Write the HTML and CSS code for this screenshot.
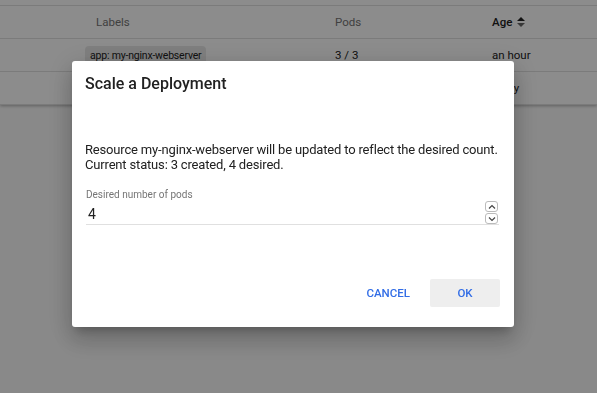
FILE: index.html
```html
<!DOCTYPE html>
<html lang="en">
<head>
    <meta charset="UTF-8">
    <meta name="viewport" content="width=device-width, initial-scale=1.0">
    <title>Scale a Deployment</title>
    <link rel="stylesheet" href="styles.css">
</head>
<body>
    <!-- Deployments table behind the dialog -->
    <div class="table-card">
        <div class="row row-top"></div>
        <div class="row header">
            <div class="cell col-name"></div>
            <div class="cell col-labels">Labels</div>
            <div class="cell col-pods">Pods</div>
            <div class="cell col-age sorted">Age
                <svg class="sort-icon" width="8" height="12" viewBox="0 0 8 12">
                    <path d="M0 5 L4 1 L8 5 Z" fill="#222"/>
                    <path d="M0 7 L4 11 L8 7 Z" fill="#666"/>
                </svg>
            </div>
        </div>
        <div class="row">
            <div class="cell col-name"></div>
            <div class="cell col-labels"><span class="chip">app: my-nginx-webserver</span></div>
            <div class="cell col-pods">3 / 3</div>
            <div class="cell col-age">an hour</div>
        </div>
        <div class="row">
            <div class="cell col-name"></div>
            <div class="cell col-labels"></div>
            <div class="cell col-pods"></div>
            <div class="cell col-age">a day</div>
        </div>
    </div>

    <!-- Scale dialog -->
    <div class="overlay">
        <div class="dialog">
            <h2 class="dialog-title">Scale a Deployment</h2>
            <p class="dialog-text">Resource my-nginx-webserver will be updated to reflect the desired count.<br>Current status: 3 created, 4 desired.</p>
            <div class="field">
                <label class="field-label">Desired number of pods</label>
                <div class="field-input">
                    <span class="field-value">4</span>
                    <div class="spinner">
                        <span class="spin-btn">
                            <svg width="8" height="6" viewBox="0 0 8 6"><path d="M1 4.5 L4 1.5 L7 4.5" fill="none" stroke="#444" stroke-width="1.2"/></svg>
                        </span>
                        <span class="spin-btn">
                            <svg width="8" height="6" viewBox="0 0 8 6"><path d="M1 1.5 L4 4.5 L7 1.5" fill="none" stroke="#444" stroke-width="1.2"/></svg>
                        </span>
                    </div>
                </div>
            </div>
            <div class="dialog-actions">
                <button class="btn">Cancel</button>
                <button class="btn btn-ok">OK</button>
            </div>
        </div>
    </div>
</body>
</html>
```

FILE: styles.css
```css
body {
    font-family: Roboto, "Noto Sans", sans-serif;
    margin: 0;
    padding: 0;
    background-color: #fafafa;
    height: 393px;
    overflow: hidden;
}

/* Table behind the dialog */
.table-card {
    background-color: #fff;
    box-shadow: 0 1px 3px rgba(0, 0, 0, 0.3);
    margin-top: -27px;
}

.row {
    display: flex;
    align-items: center;
    height: 32px;
    border-bottom: 1px solid #e0e0e0;
    font-size: 11.5px;
    color: #212121;
}

.header {
    color: #757575;
}

.col-name {
    width: 85px;
}

.col-labels {
    width: 250px;
}

.header .col-labels {
    padding-left: 11px;
    width: 239px;
}

.col-pods {
    width: 157px;
}

.col-age {
    display: flex;
    align-items: center;
    gap: 5px;
}

.sorted {
    color: #212121;
    font-weight: 500;
}

.chip {
    display: inline-block;
    background-color: #e8e8e8;
    border-radius: 4px;
    padding: 3px 5px;
    font-size: 10.5px;
    letter-spacing: -0.2px;
}

/* Dialog */
.overlay {
    position: fixed;
    left: 0;
    top: 0;
    width: 100%;
    height: 100%;
    background-color: rgba(0, 0, 0, 0.45);
    display: flex;
    justify-content: center;
    align-items: center;
    padding: 0 11px 5px 0;
    box-sizing: border-box;
}

.dialog {
    width: 442px;
    height: 266px;
    box-sizing: border-box;
    background-color: #fff;
    border-radius: 3px;
    box-shadow: 0 7px 9px -4px rgba(0, 0, 0, 0.2), 0 14px 21px 2px rgba(0, 0, 0, 0.14), 0 5px 26px 4px rgba(0, 0, 0, 0.12);
    padding: 13px 14px 20px 13px;
    display: flex;
    flex-direction: column;
}

.dialog-title {
    margin: 0;
    font-size: 16px;
    font-weight: 500;
    color: #212121;
    line-height: 20px;
}

.dialog-text {
    margin: 48px 0 0 0;
    font-size: 13px;
    letter-spacing: -0.17px;
    line-height: 15px;
    color: #212121;
}

.field {
    margin-top: 17px;
    padding-left: 1px;
}

.field-label {
    display: block;
    font-size: 10px;
    color: #757575;
    line-height: 12px;
}

.field-input {
    display: flex;
    justify-content: space-between;
    align-items: flex-end;
    border-bottom: 1px solid #e0e0e0;
    margin-right: 1px;
}

.field-value {
    font-size: 14px;
    color: #212121;
    padding: 0 0 2px 2px;
}

.spinner {
    display: flex;
    flex-direction: column;
    gap: 1px;
    margin-right: 1px;
}

.spin-btn {
    display: flex;
    align-items: center;
    justify-content: center;
    width: 11px;
    height: 9px;
    border: 1px solid #bbb;
    border-radius: 3px;
}

.dialog-actions {
    margin-top: auto;
    display: flex;
    justify-content: flex-end;
    gap: 20px;
}

.btn {
    font-family: Roboto, sans-serif;
    font-size: 11.5px;
    font-weight: 500;
    text-transform: uppercase;
    color: #326de6;
    background: none;
    border: none;
    border-radius: 2px;
    height: 28px;
    padding: 0;
    cursor: pointer;
}

.btn-ok {
    width: 70px;
    background-color: #eeeeee;
}
```
